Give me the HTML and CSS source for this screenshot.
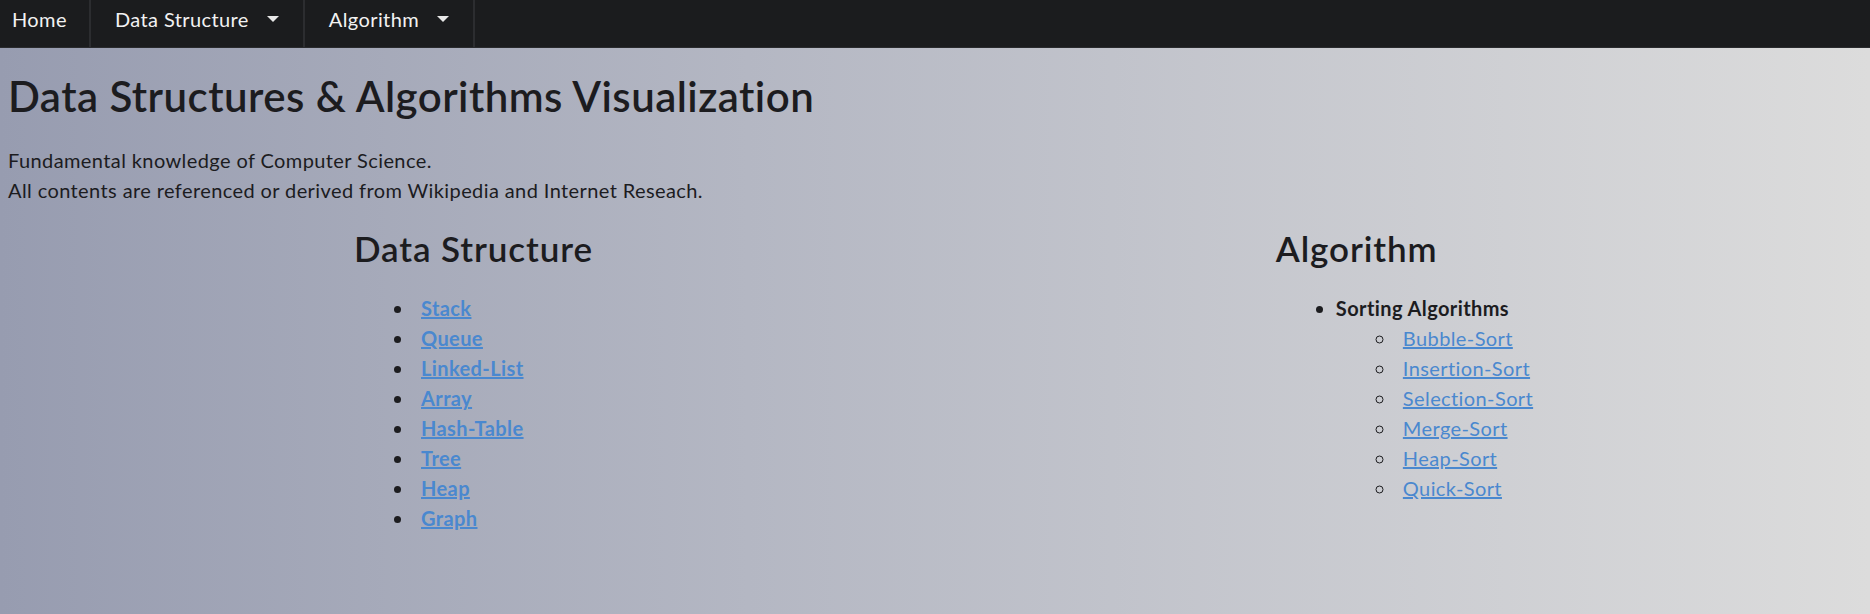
FILE: index.html
```html
<!DOCTYPE html>
<html lang="en">
<head>
<meta charset="utf-8">
<title>Data Structures &amp; Algorithms Visualization</title>
<link rel="stylesheet" href="styles.css">
</head>
<body>
<nav class="topbar">
  <a class="nav-item nav-home" href="#">Home</a>
  <a class="nav-item" href="#">Data Structure<span class="caret"></span></a>
  <a class="nav-item" href="#">Algorithm<span class="caret"></span></a>
</nav>
<main class="content">
  <h1 class="title">Data Structures &amp; Algorithms Visualization</h1>
  <p class="intro">Fundamental knowledge of Computer Science.<br>All contents are referenced or derived from Wikipedia and Internet Reseach.</p>
  <section class="columns">
    <div class="col">
      <h2 class="col-title">Data Structure</h2>
      <ul class="list list-bold">
        <li><a href="#">Stack</a></li>
        <li><a href="#">Queue</a></li>
        <li><a href="#">Linked-List</a></li>
        <li><a href="#">Array</a></li>
        <li><a href="#">Hash-Table</a></li>
        <li><a href="#">Tree</a></li>
        <li><a href="#">Heap</a></li>
        <li><a href="#">Graph</a></li>
      </ul>
    </div>
    <div class="col">
      <h2 class="col-title">Algorithm</h2>
      <ul class="list">
        <li><span class="group">Sorting Algorithms</span>
          <ul class="list sublist">
            <li><a href="#">Bubble-Sort</a></li>
            <li><a href="#">Insertion-Sort</a></li>
            <li><a href="#">Selection-Sort</a></li>
            <li><a href="#">Merge-Sort</a></li>
            <li><a href="#">Heap-Sort</a></li>
            <li><a href="#">Quick-Sort</a></li>
          </ul>
        </li>
      </ul>
    </div>
  </section>
</main>
</body>
</html>
```

FILE: styles.css
```css
html, body {
  margin: 0;
  padding: 0;
}
body {
  min-height: 614px;
  overflow-x: hidden;
  font-family: Lato, "Open Sans", "Liberation Sans", sans-serif;
  font-size: 20px;
  line-height: 1.5;
  letter-spacing: 0.4px;
  color: #1c1c1f;
  background: linear-gradient(to right, #979cb0 0%, #b4b7c3 40%, #dcdcdc 100%);
}
.topbar {
  display: flex;
  height: 48px;
  background: #1b1c1e;
  border-bottom: 1px solid #2a2b2e;
  box-sizing: border-box;
}
.nav-item {
  display: flex;
  align-items: flex-start;
  padding: 7px 24px 0 24px;
  line-height: 24px;
  color: #f2f2f2;
  text-decoration: none;
  border-right: 2px solid #2c2d30;
}
.nav-home {
  padding-left: 12px;
  padding-right: 22px;
}
.caret {
  width: 0;
  height: 0;
  margin: 9px 0 0 18px;
  border-left: 6px solid transparent;
  border-right: 6px solid transparent;
  border-top: 6px solid #e8e8e8;
}
.content {
  padding: 0 8px;
}
.title {
  margin: 23px 0 24px;
  font-size: 42px;
  font-weight: 600;
  letter-spacing: 0.45px;
  line-height: 1.2;
}
.intro {
  margin: 0;
}
.columns {
  display: grid;
  grid-template-columns: 1fr 1fr;
  margin: 22px -8px 0 0;
}
.col {
  justify-self: center;
}
.col-title {
  margin: 0 0 24px;
  font-size: 35px;
  font-weight: 600;
  letter-spacing: 0.9px;
  line-height: 1.2;
}
.list {
  margin: 0;
  padding-left: 60px;
}
.sublist {
  padding-left: 60px;
  list-style-type: circle;
}
.list a {
  margin-left: 7px;
  color: #4a88cf;
  text-decoration: underline;
}
.list-bold a {
  font-weight: 700;
}
.group {
  font-weight: 700;
}
```
